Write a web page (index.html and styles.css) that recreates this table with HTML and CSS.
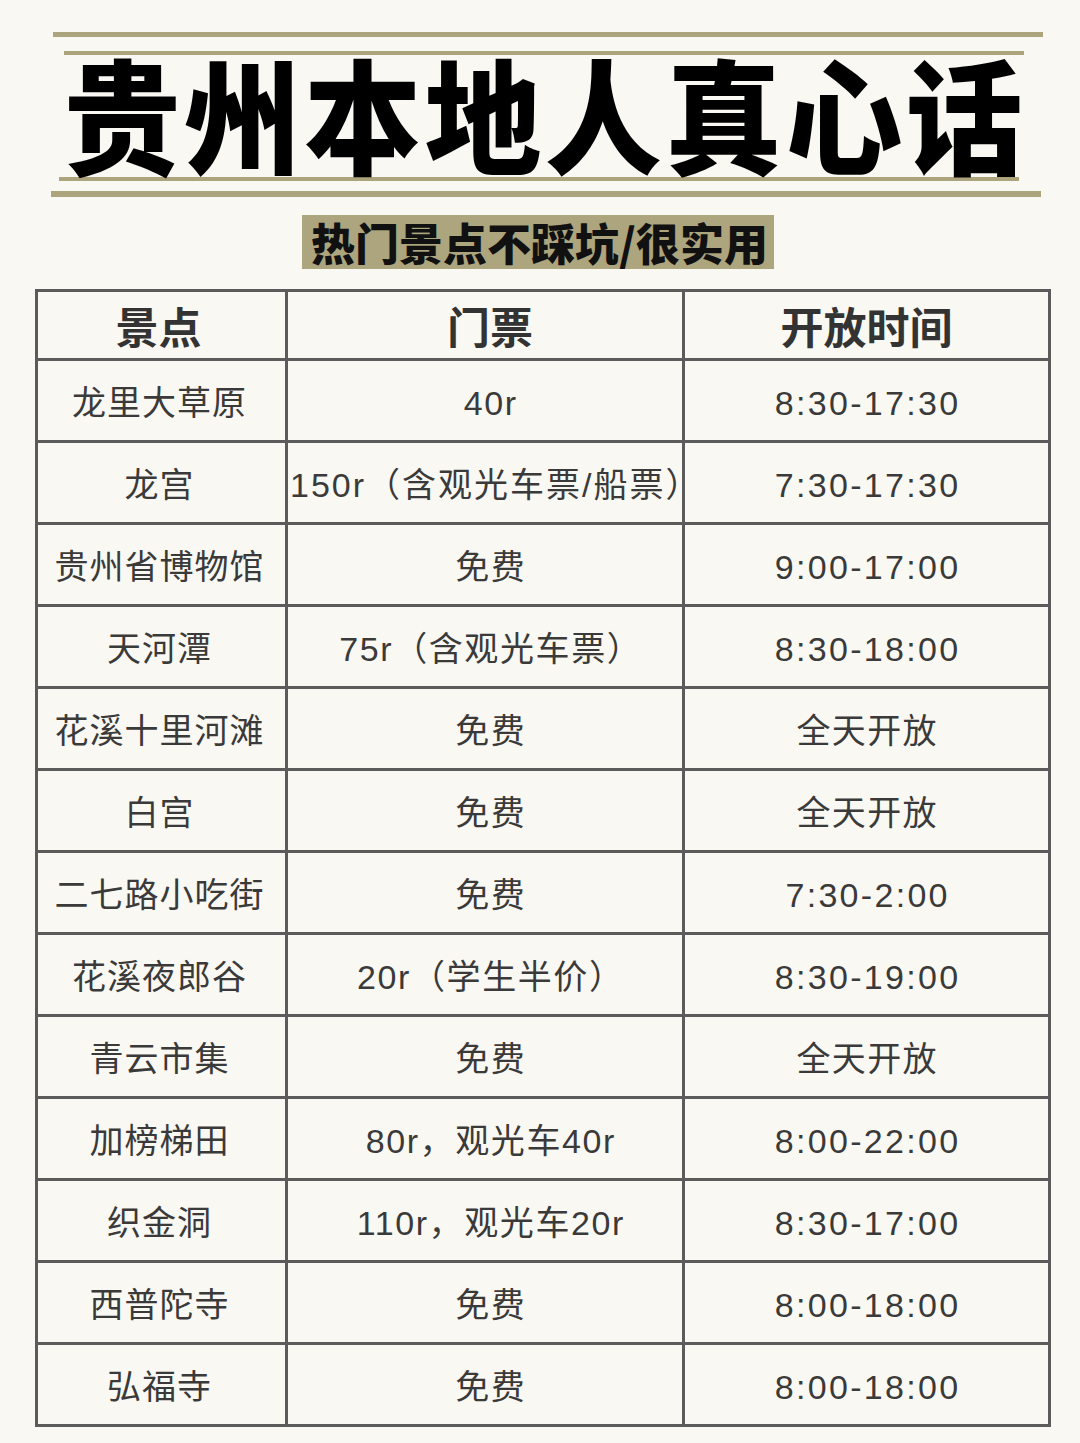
FILE: index.html
```html
<!DOCTYPE html>
<html lang="zh-CN">
<head>
<meta charset="utf-8">
<title>贵州本地人真心话</title>
<link rel="stylesheet" href="styles.css">
</head>
<body>
<div class="page">
  <header class="masthead">
    <div class="rule rule-top-thick"></div>
    <div class="rule rule-top-thin"></div>
    <h1 class="title"><span class="title-text">贵州本地人真心话</span></h1>
    <div class="rule rule-bottom-thin"></div>
    <div class="rule rule-bottom-thick"></div>
  </header>
  <div class="subtitle-wrap">
    <div class="subtitle">热门景点不踩坑/很实用</div>
  </div>
  <table class="spots">
    <colgroup>
      <col class="c1"><col class="c2"><col class="c3">
    </colgroup>
    <thead>
      <tr><th class="name">景点</th><th class="price">门票</th><th>开放时间</th></tr>
    </thead>
    <tbody>
      <tr><td class="name">龙里大草原</td><td class="price">40r</td><td class="time">8:30-17:30</td></tr>
      <tr><td class="name">龙宫</td><td class="price wide">150r（含观光车票/船票）</td><td class="time">7:30-17:30</td></tr>
      <tr><td class="name">贵州省博物馆</td><td class="price">免费</td><td class="time">9:00-17:00</td></tr>
      <tr><td class="name">天河潭</td><td class="price">75r（含观光车票）</td><td class="time">8:30-18:00</td></tr>
      <tr><td class="name">花溪十里河滩</td><td class="price">免费</td><td class="time cjk">全天开放</td></tr>
      <tr><td class="name">白宫</td><td class="price">免费</td><td class="time cjk">全天开放</td></tr>
      <tr><td class="name">二七路小吃街</td><td class="price">免费</td><td class="time">7:30-2:00</td></tr>
      <tr><td class="name">花溪夜郎谷</td><td class="price">20r（学生半价）</td><td class="time">8:30-19:00</td></tr>
      <tr><td class="name">青云市集</td><td class="price">免费</td><td class="time cjk">全天开放</td></tr>
      <tr><td class="name">加榜梯田</td><td class="price">80r，观光车40r</td><td class="time">8:00-22:00</td></tr>
      <tr><td class="name">织金洞</td><td class="price">110r，观光车20r</td><td class="time">8:30-17:00</td></tr>
      <tr><td class="name">西普陀寺</td><td class="price">免费</td><td class="time">8:00-18:00</td></tr>
      <tr><td class="name">弘福寺</td><td class="price">免费</td><td class="time">8:00-18:00</td></tr>
    </tbody>
  </table>
</div>
</body>
</html>
```

FILE: styles.css
```css
html, body {
  margin: 0;
  padding: 0;
  background: #faf8f3;
}

.page {
  width: 1080px;
  height: 1443px;
  overflow: hidden;
  font-family: "Noto Sans CJK SC", "Noto Sans", sans-serif;
  color: #383838;
}

.masthead {
  padding-top: 32px;
}

.rule {
  background: #aba47c;
}

.rule-top-thick {
  height: 5px;
  margin: 0 37px 0 53px;
}

.rule-top-thin {
  height: 4px;
  margin: 14px 56px 0 64px;
}

.title {
  margin: 0;
  height: 122px;
  line-height: 122px;
  font-size: 124px;
  font-weight: 900;
  color: #000;
  text-align: center;
  white-space: nowrap;
  padding-left: 6px;
}

.title-text {
  display: inline-block;
  letter-spacing: 4px;
  margin-right: -4px;
  transform: translateY(-5px) scaleX(0.94);
}

.rule-bottom-thin {
  height: 4px;
  margin: 0 61px 0 59px;
}

.rule-bottom-thick {
  height: 6px;
  margin: 10px 39px 0 51px;
}

.subtitle-wrap {
  display: flex;
  justify-content: center;
  margin-top: 18px;
  padding-right: 4px;
}

.subtitle {
  background: #aca57e;
  height: 54px;
  line-height: 54px;
  padding: 0 6px 0 9px;
  font-size: 44px;
  font-weight: 900;
  color: #111;
  white-space: nowrap;
}

.spots {
  margin: 20px 0 0 35px;
  width: 1016px;
  table-layout: fixed;
  border-collapse: collapse;
  border: 3px solid #5b5b5b;
}

.c1 { width: 250px; }
.c2 { width: 397px; }
.c3 { width: 366px; }

.spots th,
.spots td {
  border: 3px solid #5b5b5b;
  text-align: center;
  vertical-align: middle;
  padding: 0;
  white-space: nowrap;
}

.spots th {
  height: 66px;
  line-height: 50px;
  font-size: 43px;
  font-weight: 700;
  color: #333;
}

.spots th.name {
  padding-right: 6px;
}

.spots th.price {
  padding-left: 10px;
}

.spots td {
  height: 75px;
  padding-top: 4px;
  line-height: 40px;
  font-family: "Liberation Sans", "Noto Sans CJK SC", sans-serif;
  font-size: 34px;
  font-weight: 400;
  color: #3a3a3a;
}

.spots td.name {
  letter-spacing: 1px;
  text-indent: 1px;
  padding-right: 5px;
}

.spots td.price {
  letter-spacing: 1.6px;
  text-indent: 1.6px;
  padding-left: 10px;
}

.spots td.price.wide {
  letter-spacing: 2px;
  text-indent: 2px;
  padding-left: 0;
}

.spots td.time {
  letter-spacing: 2.3px;
  text-indent: 2.3px;
}

.spots td.time.cjk {
  letter-spacing: 1.3px;
  text-indent: 1.3px;
}
```
